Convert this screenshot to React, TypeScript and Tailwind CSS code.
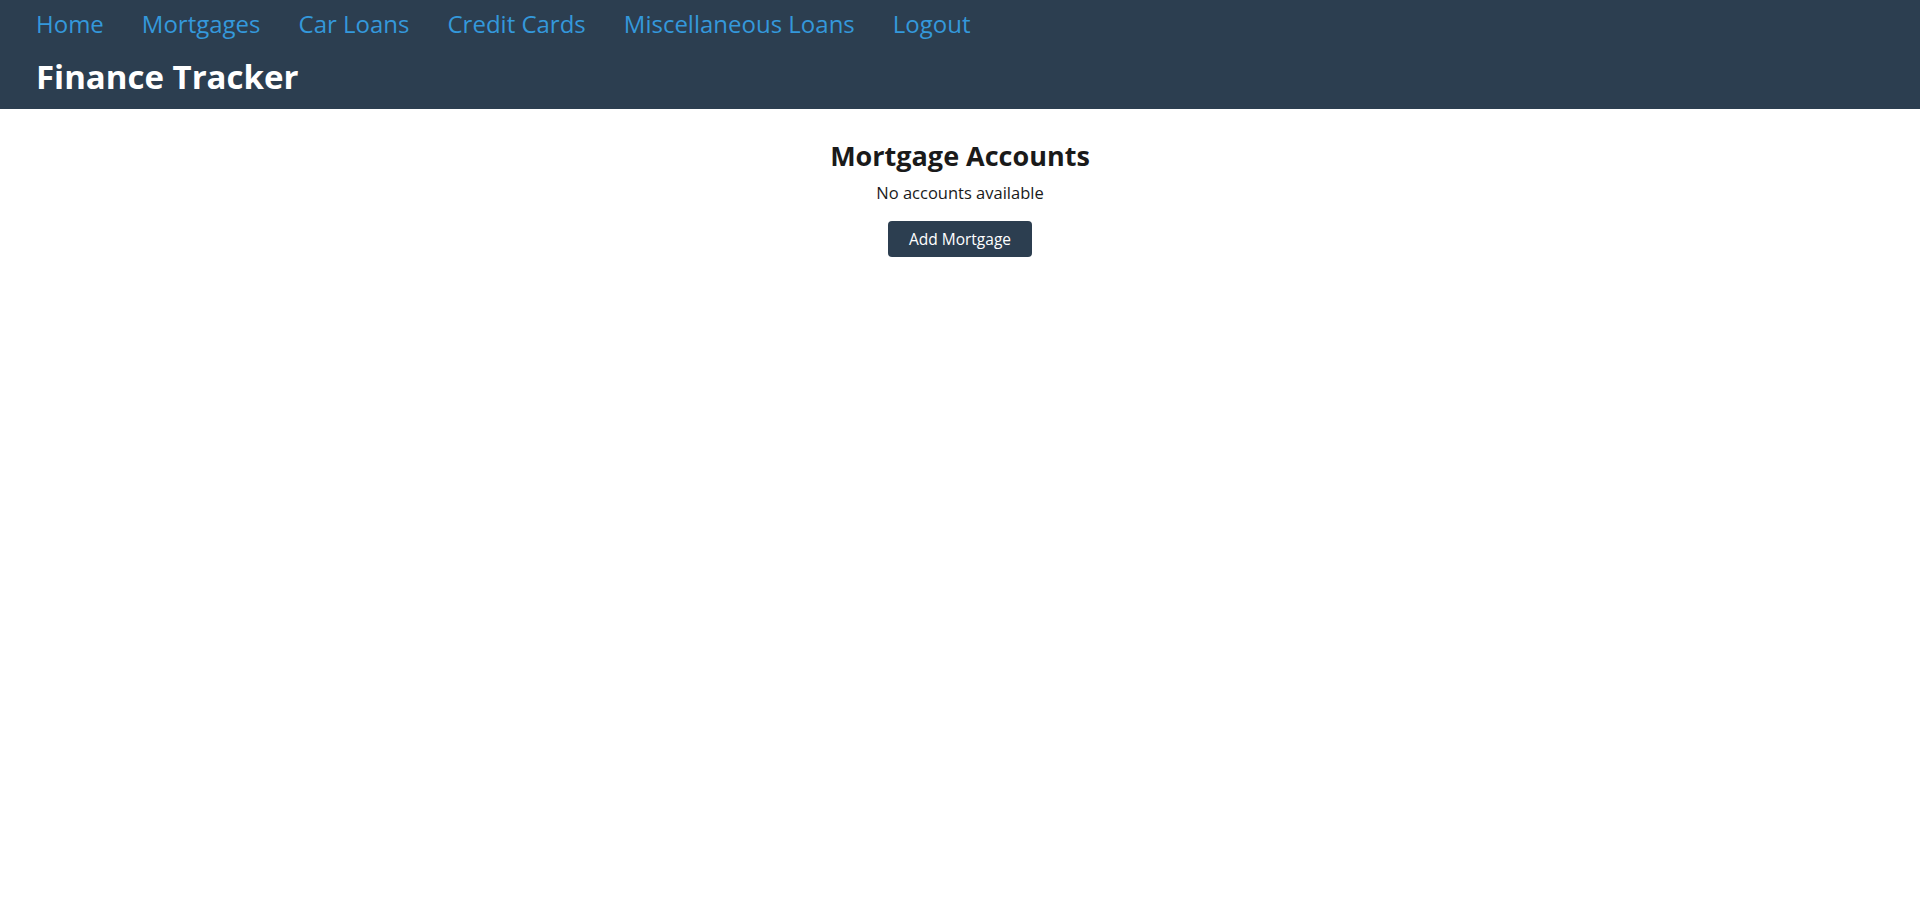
const links = ['Home', 'Mortgages', 'Car Loans', 'Credit Cards', 'Miscellaneous Loans', 'Logout'];

export default function App() {
  return (
    <div className="min-h-screen bg-white font-['Open_Sans',sans-serif]">
      <header className="h-[109px] bg-[#2c3e50] px-[36px] pt-[6px]">
        <nav className="flex gap-[38px] text-[24px] leading-[36px] text-[#3498db]">
          {links.map(l => (
            <a key={l} href="#" className="hover:underline">
              {l}
            </a>
          ))}
        </nav>
        <h1 className="mt-[10px] text-[33px] font-bold leading-[50px] text-white">Finance Tracker</h1>
      </header>

      <main className="flex flex-col items-center pt-[26px] text-[#1a1a1a]">
        <h2 className="text-[27px] font-bold leading-[42px]">Mortgage Accounts</h2>
        <p className="mt-[4px] text-[16.5px] leading-[24px]">No accounts available</p>
        <button className="mt-[16px] h-[36px] w-[144px] rounded-[4px] bg-[#2c3e50] pt-[1px] text-[15.5px] text-white">
          Add Mortgage
        </button>
      </main>
    </div>
  );
}
